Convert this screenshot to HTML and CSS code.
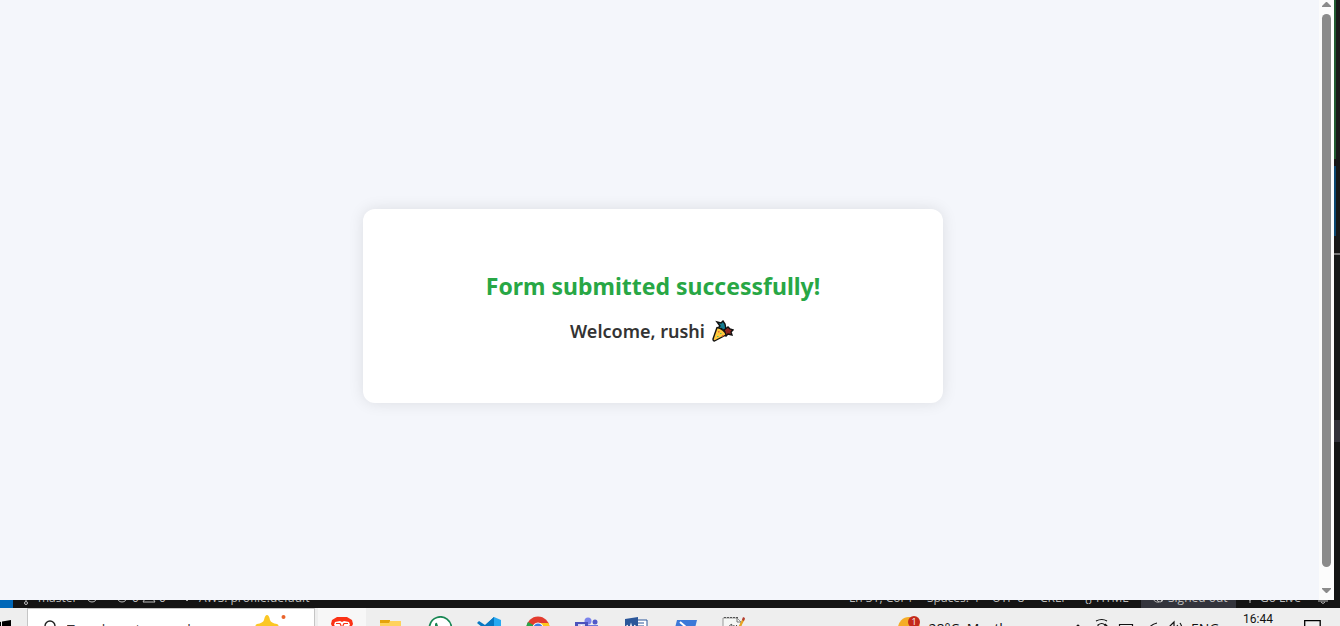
FILE: index.html
```html
<!DOCTYPE html>
<html lang="en">
<head>
<meta charset="utf-8">
<title>Form submitted</title>
<link rel="stylesheet" href="styles.css">
</head>
<body>
<div class="workspace">
  <main class="page">
    <section class="card">
      <h1 class="card-title">Form submitted successfully!</h1>
      <h2 class="card-welcome">Welcome, rushi
        <svg class="party" viewBox="0 0 22 22" role="img" aria-label="Party popper">
          <path d="M5 2l4 1 2-2 2 3 1 5-3 3-5-4 2-2z" fill="#147c91" stroke="#111" stroke-width="1.4"/>
          <path d="M12 10l4-3 2 2 3 1-2 2 1 3-4-1-2 2-4-3z" fill="#8f2620" stroke="#111" stroke-width="1.4"/>
          <path d="M9 8l4 3-1 3-4-3z" fill="#272052" stroke="#111"/>
          <path d="M5 7.500C9 8 14 12 14 15L2.500 21Q1 21 1 19z" fill="#ffc83d" stroke="#111" stroke-width="1.400" stroke-linejoin="round"/>
          <path d="M6 11h1.500v1.500H6zM10 15h1.500v1.500H10z" fill="#ed6b35"/>
          <path d="M8 13h1.500v1H8zM5 16h1.500v1H5z" fill="#55b96b"/>
        </svg>
      </h2>
    </section>
  </main>
  <div class="scrollbar">
    <svg class="arrow" viewBox="0 0 9 5"><path d="M0 5V4l4-4h1l4 4v1z" fill="#8b8b8b"/></svg>
    <div class="thumb"></div>
    <svg class="arrow" viewBox="0 0 9 5"><path d="M0 0v1l4 4h1l4-4V0z" fill="#8b8b8b"/></svg>
  </div>
  <div class="edge">
    <div class="edge-added"></div>
    <div class="edge-changed"></div>
    <div class="edge-line"></div>
    <div class="edge-panel"></div>
    <div class="edge-selected"></div>
    <div class="edge-rest"></div>
  </div>
</div>

<div class="statusbar">
  <div class="remote"></div>
  <div class="st st-branch"><svg class="sti" viewBox="0 0 14 14"><g fill="none" stroke="#bbb"><circle cx="5" cy="3" r="2"/><circle cx="5" cy="12" r="1.500"/><path d="M5 5v5"/></g></svg>master</div>
  <div class="st st-sync"><svg class="sti" viewBox="0 0 14 14"><path d="M2 6a5 5 0 0 0 10 0" fill="none" stroke="#bbb"/></svg></div>
  <div class="st st-problems"><svg class="sti" viewBox="0 0 14 14"><g fill="none" stroke="#bbb"><circle cx="7" cy="6" r="5"/><path d="M5 4l4 4M9 4L5 8"/></g></svg>0 <svg class="sti" viewBox="0 0 14 14"><path d="M7 1l6 10H1zM7 4v4" fill="none" stroke="#bbb"/></svg>0</div>
  <div class="st st-aws"><svg class="sti" viewBox="0 0 14 14"><path d="M4 6l3 4 3-4" fill="none" stroke="#bbb"/></svg>AWS: profile:default</div>
  <div class="st st-line">Ln 31, Col 1</div>
  <div class="st st-spaces">Spaces: 4</div>
  <div class="st st-utf">UTF-8</div>
  <div class="st st-crlf">CRLF</div>
  <div class="st st-lang">{} HTML</div>
  <div class="st st-signed"><svg class="sti" viewBox="0 0 14 14"><g fill="none" stroke="#bbb"><path d="M2 5a5 5 0 0 0 6 6"/><circle cx="9" cy="8" r="3"/><path d="M7 6l4 4"/></g></svg>Signed out</div>
  <div class="st st-live"><svg class="sti" viewBox="0 0 14 14"><path d="M7 3v9M4 8l3 1 3-1" fill="none" stroke="#bbb"/></svg>Go Live</div>
  <div class="st st-bell"><svg class="sti" viewBox="0 0 14 14"><path d="M2 10h10M5 11q2 3 4 0M3 9V6a4 4 0 0 1 8 0v3" fill="none" stroke="#bbb"/></svg></div>
</div>

<footer class="taskbar">
  <button class="start" aria-label="Start"><svg class="winlogo" viewBox="0 0 12 17"><path d="M0 2l1-.2V8H0zM2 1.600L11 0v8H2zM0 9h1v7H0zM2 9h9v8L2 16z" fill="#000"/></svg></button>
  <label class="search">
    <svg class="lens" viewBox="0 0 16 16"><circle cx="8" cy="6" r="5" fill="none" stroke="#222" stroke-width="1.400"/><path d="M4 10l-3 4" stroke="#222"/></svg>
    <input class="search-input" type="text" placeholder="Type here to search" aria-label="Search">
    <svg class="star" viewBox="0 0 36 28"><path d="M14 1q2 0 3 5 1 3 7 4 3 1 0 4l-4 5 1 7-7-3-7 3 1-7-4-5q-3-3 0-4 6-1 7-4 1-5 3-5z" fill="#fbc724"/><circle cx="30.500" cy="3" r="2" fill="#e9642c"/></svg>
  </label>
  <nav class="apps">
    <button class="app app-active" aria-label="Brave"><svg class="ico" viewBox="0 0 24 24"><path d="M2 4l5-3h10l5 3 1 4-2 4-2 6-7 5-7-5-2-6-2-4z" fill="#fb3216"/><path d="M5 6l5-1 2 1 2-1 5 1 1 3-4 4v3l-4 4-4-4v-3L4 9z" fill="#fff"/><path d="M6 7.500h4l1 2v4M18 7.500h-4l-1 2v4" fill="none" stroke="#fb3216" stroke-width="1.200"/></svg></button>
    <button class="app" aria-label="File Explorer"><svg class="ico" viewBox="0 0 24 24"><path d="M1 4h10v4H1z" fill="#e5a30b"/><path d="M11 5h11v15H1V7h9z" fill="#ffd25c"/></svg></button>
    <button class="app" aria-label="WhatsApp"><svg class="ico" viewBox="0 0 24 24"><path d="M4 19a11 11 0 1 1 4 3l-6 1z" fill="#fff" stroke="#198754" stroke-width="1.800"/><path d="M7 8q1-2 2-1l1 3-1 2q2 3 4 3l2-1 3 2q-1 3-4 3-6-2-7-8z" fill="#198754"/></svg></button>
    <button class="app" aria-label="Visual Studio Code"><svg class="ico" viewBox="0 0 24 24"><path d="M17 1L8 9 2 5 0 7l19 15z" fill="#0878c3"/><path d="M0 17L17 1v7L2 19z" fill="#0878c3"/><path d="M17 1l7 3v16l-7 3z" fill="#28a9f2"/></svg></button>
    <button class="app" aria-label="Chrome"><svg class="ico" viewBox="0 0 24 24"><circle cx="12" cy="12" r="11.500" fill="#e33b2e"/><path d="M2 6A11.500 11.500 0 0 0 12 23.500l5-9z" fill="#27a64b"/><path d="M12 7h10.500A11.500 11.500 0 0 1 12 23.500l5-9z" fill="#fdc71e"/><circle cx="12" cy="12" r="5.500" fill="#fff"/><circle cx="12" cy="12" r="4.500" fill="#397ee8"/></svg></button>
    <button class="app" aria-label="Teams"><svg class="ico" viewBox="0 0 24 24"><circle cx="13" cy="5" r="3.500" fill="#7b83eb"/><circle cx="20" cy="6" r="2.500" fill="#5059c9"/><path d="M8 9h15v8q-2 5-8 5-6 0-7-5z" fill="#7079de"/><path d="M0 6h13v13H0z" fill="#4b53bc"/><path d="M3 9h7M6.500 9v7" stroke="#fff" stroke-width="1.600"/></svg></button>
    <button class="app" aria-label="Word"><svg class="ico" viewBox="0 0 24 24"><path d="M11 4h12v17H11z" fill="#fff" stroke="#2b579a"/><path d="M14 7h6M14 10h6M14 13h6" stroke="#2b579a"/><path d="M1 3l13-2v22L1 21z" fill="#2b579a"/><path d="M3 9l2 7 2-7 2 7 2-7" fill="none" stroke="#fff" stroke-width="1.400"/></svg></button>
    <button class="app" aria-label="PowerShell"><svg class="ico" viewBox="0 0 24 24"><path d="M4 4h20l-4 16H0z" fill="#3c79d8"/><path d="M7 6l7 6-9 6" fill="none" stroke="#fff" stroke-width="2"/></svg></button>
    <button class="app" aria-label="Notepad++"><svg class="ico" viewBox="0 0 24 24"><path d="M1 2h14l4 4v17H1z" fill="#f5f7f5" stroke="#999"/><path d="M2 1.500h14" stroke="#555" stroke-dasharray="2 1"/><path d="M15 2v4h4" fill="none" stroke="#777"/><path d="M5 14q5-9 5-4t-3 5M12 9q-2 6 3 0" fill="none" stroke="#444"/><path d="M21 2l2 1-8 15-2 2v-3z" fill="#e9a522"/><path d="M21 1l2 1-1 3-2-1z" fill="#b13d35"/></svg></button>
  </nav>
  <div class="weather">
    <svg class="sun" viewBox="0 0 24 24"><circle cx="11" cy="12" r="11" fill="#f5ad27"/><circle cx="16" cy="6" r="6" fill="#c42b1c"/><text class="badge" x="16" y="9">1</text></svg>
    <span class="forecast">28°C&nbsp; Mostly sunny</span>
  </div>
  <div class="tray">
    <svg class="tray-icons" viewBox="0 0 120 24"><g fill="none" stroke="#111" stroke-width="1.200"><path d="M2 14l5-5 5 5M25 5q6-3 11 0M27 9q4-3 7 0v6h-7zM34 8l3 3M48.500 8.500h13v9h-13zM77 15q1-6 9-8M80 16q1-4 6-5M95 11h3l5-5v13l-5-4h-3zM106 9q3 4 0 8M109 7q4 6 0 11"/></g></svg>
    <span class="language">ENG</span>
    <time class="clock">16:44</time>
    <svg class="notice" viewBox="0 0 17 17"><path d="M.7.700h15.500v12h-5l-3 3v-3H.7z" fill="none" stroke="#000" stroke-width="1.300"/></svg>
  </div>
</footer>
</body>
</html>
```
FILE: styles.css
```css
* { box-sizing: border-box; }
body {
  margin: 0;
  height: 100vh;
  display: flex;
  flex-direction: column;
  overflow: hidden;
  background: #eee;
  font-family: "Open Sans", "Noto Sans", sans-serif;
}
svg { display: block; flex: none; }
button { border: 0; padding: 0; background: none; }

.workspace { flex: 1; min-height: 0; display: flex; }
.page {
  flex: 1;
  display: flex;
  align-items: center;
  justify-content: center;
  padding: 12px 13px 0 0;
  background: #f4f6fb;
}
.card {
  width: 100%;
  max-width: 580px;
  padding: 60px 40px;
  border-radius: 12px;
  background: #fff;
  box-shadow: 0 0 15px rgba(0, 0, 0, 0.1);
  text-align: center;
}
.card-title {
  margin: 0 0 16px;
  color: #28a745;
  font: 700 23px/34px "Noto Sans", "Open Sans", sans-serif;
}
.card-welcome {
  display: flex;
  align-items: center;
  justify-content: center;
  gap: 7px;
  margin: 0;
  padding-right: 2px;
  color: #333;
  font: 600 18px/24px "Noto Sans", "Open Sans", sans-serif;
}
.party { width: 22px; height: 22px; }

.scrollbar {
  width: 15px;
  display: flex;
  flex-direction: column;
  align-items: center;
  gap: 7px;
  padding: 2px 0 7px;
  background: #fcfcfc;
}
.arrow { width: 9px; height: 5px; }
.thumb { flex: 1; width: 9px; border-radius: 5px; background: #8b8b8b; margin-bottom: 14px; }

.edge { width: 6px; display: flex; flex-direction: column; background: #181818; }
.edge-added { height: 159px; border-left: 2px solid #1f5a30; }
.edge-changed { height: 70px; margin-top: 7px; border-left: 2px solid #0b4770; }
.edge-line { height: 2px; margin-top: 17px; background: #777; }
.edge-panel { height: 165px; background: #171919; }
.edge-selected { height: 22px; background: #303038; }
.edge-rest { flex: 1; background: #131414; }

.statusbar {
  height: 8px;
  display: flex;
  align-items: flex-end;
  overflow: hidden;
  background: #141414;
  color: #bbb;
  font-size: 12px;
  line-height: 16px;
}
.st {
  flex: none;
  display: flex;
  align-items: center;
  gap: 3px;
  height: 22px;
  padding-top: 2px;
  white-space: nowrap;
}
.sti { width: 14px; height: 14px; }
.remote { flex: none; width: 13px; height: 22px; background: #0067b8; }
.st-branch { width: 72px; padding-left: 8px; }
.st-sync { width: 30px; }
.st-problems { width: 65px; }
.st-aws { margin-right: auto; gap: 5px; }
.st-line { width: 78px; }
.st-spaces { width: 65px; }
.st-utf { width: 48px; }
.st-crlf { width: 44px; }
.st-lang { width: 57px; }
.st-signed { width: 95px; padding-left: 10px; background: #33343c; }
.st-live { width: 80px; padding-left: 7px; }
.st-bell { width: 24px; }

.taskbar {
  height: 18px;
  display: flex;
  align-items: flex-start;
  overflow: hidden;
  background: #eee;
  color: #111;
  font-size: 14px;
}
.start { flex: none; width: 27px; height: 40px; }
.winlogo { width: 12px; height: 17px; }
.search {
  flex: none;
  width: 288px;
  height: 40px;
  display: flex;
  align-items: center;
  gap: 9px;
  padding-left: 14px;
  border: 1px solid #c5c5c5;
  background: #fff;
}
.lens { width: 16px; height: 16px; }
.search-input {
  width: 177px;
  height: 24px;
  padding: 2px 0 0;
  border: 0;
  background: transparent;
  font: 14px/22px "Open Sans", sans-serif;
}
.search-input::placeholder { color: #333; opacity: 1; }
.star { width: 36px; height: 28px; }
.apps { flex: none; display: flex; gap: 1px; margin-left: 3px; }
.app { width: 48px; height: 40px; display: flex; align-items: center; justify-content: center; }
.app-active { background: #f7f7f7; }
.ico { width: 24px; height: 24px; }
.weather { height: 40px; display: flex; align-items: center; gap: 7px; margin-left: auto; white-space: nowrap; }
.forecast { padding-top: 1px; }
.sun { width: 24px; height: 24px; }
.badge { fill: #fff; font-size: 9px; text-anchor: middle; }
.tray { flex: none; width: 269px; height: 40px; display: flex; align-items: center; margin-left: 18px; }
.tray-icons { width: 120px; height: 24px; }
.language { width: 52px; }
.clock { align-self: flex-start; width: 61px; padding-top: 2px; font: 12px/18px Roboto, sans-serif; }
.notice { width: 17px; height: 17px; }
```
